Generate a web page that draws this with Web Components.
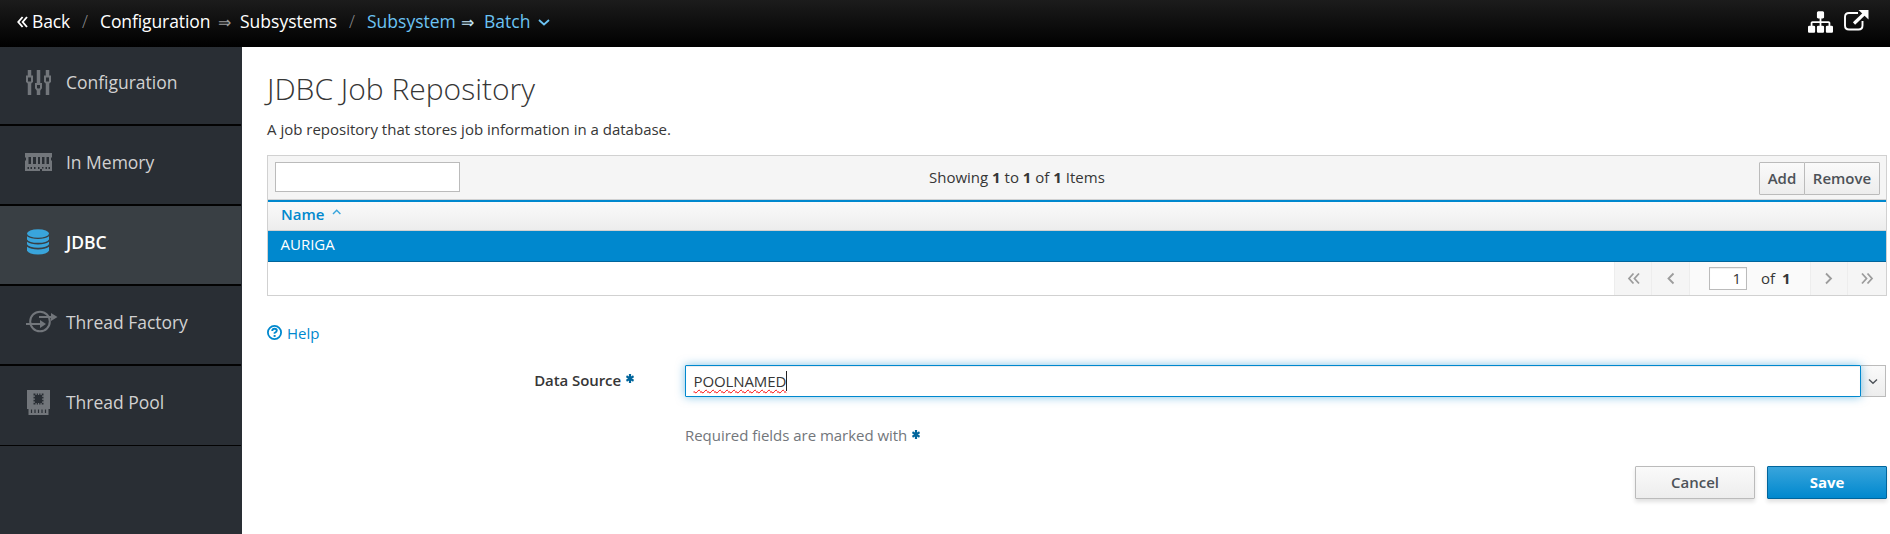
<!DOCTYPE html>
<html lang="en"><head><meta charset="utf-8"><title>JDBC Job Repository</title>
<style>html,body{margin:0;height:534px;overflow:hidden;background:#fff;font-family:"Open Sans","Noto Sans",sans-serif;font-size:15px;color:#363636}</style></head>
<body><console-shell></console-shell>
<script>
const define=(name,html)=>{const t=document.createElement('template');t.innerHTML=html;
customElements.define(name,class extends HTMLElement{constructor(){super();this.attachShadow({mode:'open'}).append(t.content.cloneNode(true));}});};

define('top-bar',`<style>
:host{display:flex;height:47px;box-sizing:border-box;padding:0 21px 0 17px;background:linear-gradient(#1c1c1c,#000);color:#fff;font-size:17.5px;line-height:43px;white-space:nowrap}
span{display:block;flex:none}.s{color:#8b8d8f;font-weight:300}.l{color:#6cc3f3}.a{font:15.5px/45px "Liberation Serif",serif;color:#9c9c9c}.l.a{color:#c7e7fa}
svg{display:block;flex:none}.g{flex:1}
</style>
<svg width="15" height="43" viewBox="0 0 15 43" fill="none" stroke="#fff" stroke-width="1.9"><path d="M5.6 17 1.3 22l4.3 5M10 17l-4.3 5 4.3 5"/></svg>
<span style="width:50px;letter-spacing:-.15px">Back</span><span class="s" style="width:18px">/</span>
<span style="width:118px;letter-spacing:-.1px">Configuration</span><span class="a" style="width:22px">⇒</span>
<span style="width:109px">Subsystems</span><span class="s" style="width:18px">/</span>
<span class="l" style="width:94px">Subsystem</span><span class="l a" style="width:23px">⇒</span><span class="l" style="width:54px">Batch</span>
<svg width="14" height="43" viewBox="0 0 14 43" fill="none" stroke="#6cc3f3" stroke-width="1.8"><path d="m1 20 5 4.500 5-4.500"/></svg>
<i class="g"></i>
<svg width="25" height="44" viewBox="0 -1095 1792 3154" fill="#fff" style="margin-right:11px"><path transform="translate(0 -410)" d="M1792 1248v320q0 40-28 68t-68 28h-320q-40 0-68-28t-28-68v-320q0-40 28-68t68-28h96v-192h-512v192h96q40 0 68 28t28 68v320q0 40-28 68t-68 28h-320q-40 0-68-28t-28-68v-320q0-40 28-68t68-28h96v-192h-512v192h96q40 0 68 28t28 68v320q0 40-28 68t-68 28h-320q-40 0-68-28t-28-68v-320q0-40 28-68t68-28h96v-192q0-52 38-90t90-38h512v-192h-96q-40 0-68-28t-28-68v-320q0-40 28-68t68-28h320q40 0 68 28t28 68v320q0 40-28 68t-68 28h-96v192h512q52 0 90 38t38 90v192h96q40 0 68 28t28 68z"/></svg>
<svg width="25" height="44" viewBox="0 0 25 44"><path d="M14 13H5q-4 0-4 4v8.500q0 4 4 4h9.500q4 0 4-4V21" fill="none" stroke="#fff" stroke-width="1.9"/><path d="m10 23.500 10-9.500" stroke="#fff" stroke-width="3.200"/><path d="M14.500 10H24.500V19.500z" fill="#fff"/></svg>`);

define('nav-item',`<style>
:host{display:flex;align-items:center;height:80px;box-sizing:border-box;border-bottom:2px solid #030303;padding-left:25px;padding-bottom:6px;color:#d1d1d1;font-size:17.5px;line-height:24px;background:#292e34;letter-spacing:-.02px;--icon:#72767b}
:host([first]){height:79px;padding-bottom:7px}
:host([last]){border-bottom-width:1px;padding-bottom:7px}
:host([active]){background:#393f44;color:#fff;font-weight:600;--icon:#39a5dc}
div{width:41px;height:32px;flex:none;color:var(--icon)}
</style><div><slot name="icon"></slot></div><slot></slot>`);

define('side-nav',`<style>:host{display:block;flex:none;width:241px;background:#292e34;border-right:1px solid #292e34}svg{display:block}</style>
<nav-item first><svg slot="icon" width="34" height="32" fill="none" stroke="currentColor"><path stroke-width="3.500" d="M4.500 4v7m0 6v12M13.500 4v13m0 6v6M22.500 4v7m0 6v12"/><path stroke-width="2" d="M2 10.500h5v5l-1.200 1H3.200l-1.200-1zM11 18h5v4l-1.200 1.500h-2.600L11 22zM20 10.500h5v5l-1.200 1h-2.600l-1.200-1z"/></svg>Configuration</nav-item>
<nav-item><svg slot="icon" width="34" height="32" fill="currentColor"><path fill-rule="evenodd" d="M0 7h27v4l-1 1v2l1 1v10h-10v-2h-2v2H0V15l1-1v-2l-1-1zM3.500 11v7H6v-7zM8 11v7h3v-7zM13 11v7h2v-7zM17 11v7h2.500v-7zM21.500 11v7H24v-7zM2.500 21v2H4v-2zM5.500 21v2H7v-2zM9 21v2h1.500v-2zM13 21v2h1.500v-2zM17 21v1.500h1.500V21zM20.500 21v2H22v-2zM23.500 21v2H25v-2z"/></svg>In Memory</nav-item>
<nav-item active><svg slot="icon" width="34" height="32" fill="currentColor"><ellipse cx="13" cy="7.500" rx="11" ry="4.300"/><path d="M2 10.200q4 2.700 11 2.700t11-2.700v3.200q-2 3.400-11 3.400T2 13.400zM2 15.700q4 2.700 11 2.700t11-2.700v2.600q-2 3.400-11 3.400T2 18.300zM2 20.800q4 2.700 11 2.700t11-2.700v4q-2 3.700-11 3.700T2 24.800z"/></svg>JDBC</nav-item>
<nav-item><svg slot="icon" width="34" height="32" fill="none" stroke="currentColor" stroke-width="2"><circle cx="15" cy="15.500" r="9.800"/><path d="M1 18h16M14 11h14"/><path fill="currentColor" stroke="none" d="m15 14 6 4-6 4zM26 7l6.500 4-6.500 4z"/></svg>Thread Factory</nav-item>
<nav-item last><svg slot="icon" width="34" height="32" fill="currentColor"><path fill-rule="evenodd" d="M2 4h23v19h-1.500v6h-20v-6H2zM8.500 7.500v11h10v-11z"/><path d="M7 9.500h3v1.200H7zM7 12.500h3v1.200H7zM7 15.500h3v1.200H7zM17 9.500h3v1.200h-3zM17 12.500h3v1.200h-3zM17 15.500h3v1.200h-3zM10.500 7h1.200v2h-1.200zM13 7h1.200v2H13zM15.500 7h1.200v2h-1.200zM10.500 17h1.200v2h-1.200zM13 17h1.200v2H13zM15.500 17h1.200v2h-1.200z"/><path stroke="#292e34" stroke-width="1.200" d="M6.500 23.500v3.500M10 23.500v3.500M13.500 23.500v3.500M17 23.500v3.500M20.500 23.500v3.500"/></svg>Thread Pool</nav-item>`);

define('ui-button',`<style>
:host{display:block;box-sizing:border-box;width:120px;height:33px;border:1px solid #bbb;border-radius:1px;background:linear-gradient(#fafafa,#ededed);color:#4d5258;font-weight:600;line-height:31px;text-align:center;box-shadow:0 3px 4px rgba(3,3,3,.12)}
:host([primary]){border-color:#00659c;background:linear-gradient(#39a5dc,#0088ce);color:#fff;font-weight:700}
:host([flat]){box-shadow:none;line-height:30px}
</style><slot></slot>`);

define('page-nav',`<style>
:host{display:flex;height:33px;line-height:31px;background:#fafafa}
.b{box-sizing:border-box;width:37px;border-left:1px solid #ededed;background:#f5f5f5}svg{display:block;margin:auto}
.m{display:flex;width:121px;box-sizing:border-box;border-left:1px solid #ededed;padding:5px 0 0 19px}
.i{box-sizing:border-box;width:38px;height:23px;border:1px solid #bbb;background:#fff;box-shadow:inset 0 1px 1px rgba(3,3,3,.075);line-height:21px;text-align:right;padding-right:5px;margin-right:14px}
.o{width:21px;line-height:23px}b{line-height:23px}path{fill:none;stroke:#9c9c9c;stroke-width:1.800}
</style>
<div class="b"><svg width="37" height="33"><path d="m18.500 11.500-4.500 5 4.500 5M24 11.500l-4.500 5 4.500 5"/></svg></div>
<div class="b" style="width:38px"><svg width="37" height="33"><path d="m21.500 11.500-5 5 5 5"/></svg></div>
<div class="m"><span class="i">1</span><span class="o">of</span><b>1</b></div>
<div class="b"><svg width="37" height="33"><path d="m15 11.500 5 5-5 5"/></svg></div>
<div class="b" style="width:39px"><svg width="37" height="33"><path d="m13 11.500 4.500 5-4.500 5M18.500 11.500l4.500 5-4.500 5"/></svg></div>`);

define('data-table',`<style>
:host{display:block;box-sizing:border-box;width:1620px;height:141px;border:1px solid #d1d1d1}
.t{display:grid;grid-template-columns:654px auto 1fr;box-sizing:border-box;height:44px;padding:6px 6px 0 7px;background:#f5f5f5;border-bottom:1px solid #d1d1d1}
input{box-sizing:border-box;width:185px;height:30px;border:1px solid #bbb;background:#fff;margin:0;padding:0 7px;outline:0}
.n{line-height:31px}.g{display:flex;justify-content:flex-end}
.h{display:flex;box-sizing:border-box;height:31px;border-top:2px solid #0088ce;border-bottom:1px solid #d1d1d1;background:linear-gradient(#fafafa,#ededed);padding-left:13px;font-weight:600;color:#0088ce;line-height:24px}
.r{box-sizing:border-box;height:31px;background:#0088ce;border-bottom:1px solid #00659c;padding-left:12.500px;color:#fff;line-height:27px}
.f{display:flex;justify-content:flex-end}
</style>
<div class="t"><input aria-label="Filter"><span class="n">Showing <b>1</b> to <b>1</b> of <b>1</b> Items</span><span class="g"><ui-button flat style="width:46px">Add</ui-button><ui-button flat style="width:76px;margin-left:-1px">Remove</ui-button></span></div>
<div class="h">Name<svg width="10" height="24" style="margin-left:8px" fill="none" stroke="#39a5dc" stroke-width="1.400"><path d="m1 12 3.700-3.700L8.400 12"/></svg></div>
<div class="r">AURIGA</div>
<div class="f"><page-nav></page-nav></div>`);

define('required-mark',`<style>:host{display:inline-block;width:8px;height:9px;color:#00659c}svg{display:block}</style>
<svg width="8" height="9" stroke="currentColor" stroke-width="2.200"><path d="M4 0v9M.4 2.300l7.200 4.400M.4 6.700l7.200-4.400"/></svg>`);

define('combo-field',`<style>
:host{display:flex;width:1201px;height:32px}
.i{box-sizing:border-box;width:1176px;border:1px solid #0088ce;border-radius:1px;background:#fff;padding:5px 0 0 7.500px;box-shadow:inset 0 1px 1px rgba(3,3,3,.075),0 0 10px rgba(0,136,206,.5);z-index:1;display:flex}
.w{line-height:20px;height:20px;letter-spacing:-.1px;text-decoration:underline wavy #f00 1px;text-underline-offset:1.500px;text-decoration-skip-ink:none}
.c{width:1px;height:20px;background:#222}
.d{box-sizing:border-box;width:25px;border:1px solid #bbb;border-left:0;background:linear-gradient(#fafafa,#ededed)}svg{display:block}
</style><div class="i"><span class="w"><slot></slot></span><span class="c"></span></div>
<div class="d"><svg width="24" height="30" fill="none" stroke="#4d5258" stroke-width="1.400"><path d="m8 13.500 4 3.700 4-3.700"/></svg></div>`);

define('main-page',`<style>
:host{display:block;box-sizing:border-box;width:1645px;padding:24px 0 0 25px}
h1{margin:0;font-size:30px;font-weight:300;line-height:35px}
p{margin:0;line-height:22px;padding:12px 0 15px}
.q{display:flex;color:#0088ce;line-height:20px;margin-top:27px;height:42px}
.r{display:flex}.l{width:367px;margin-right:51px;text-align:right;font-weight:600;line-height:30px;letter-spacing:-.08px}
.l required-mark{margin-left:5px;vertical-align:3px}
.n{margin:28px 0 0 418px;line-height:20px;color:#72767b;letter-spacing:-.03px}.n required-mark{margin-left:5px;vertical-align:2px}
.b{display:flex;justify-content:flex-end;gap:12px;width:1620px;margin-top:21px}
</style>
<h1>JDBC Job Repository</h1><p>A job repository that stores job information in a database.</p>
<data-table></data-table>
<div class="q"><svg width="20" height="20" fill="none" stroke="#0088ce" stroke-width="1.800"><circle cx="7.500" cy="9.500" r="6.600"/><path d="M5.200 8q.2-2.200 2.400-2.200t2.200 1.800q0 1.300-2.200 2.400v.8" stroke-width="1.900"/><path d="M7.600 12v1.900" stroke-width="2"/></svg>Help</div>
<div class="r"><div class="l">Data Source<required-mark></required-mark></div><combo-field>POOLNAMED</combo-field></div>
<div class="n">Required fields are marked with<required-mark></required-mark></div>
<div class="b"><ui-button>Cancel</ui-button><ui-button primary>Save</ui-button></div>`);

define('console-shell',`<style>:host{display:block;width:1890px;height:534px;overflow:hidden}.b{display:flex;height:487px}</style>
<top-bar></top-bar><div class="b"><side-nav></side-nav><main-page></main-page></div>`);
</script></body></html>
